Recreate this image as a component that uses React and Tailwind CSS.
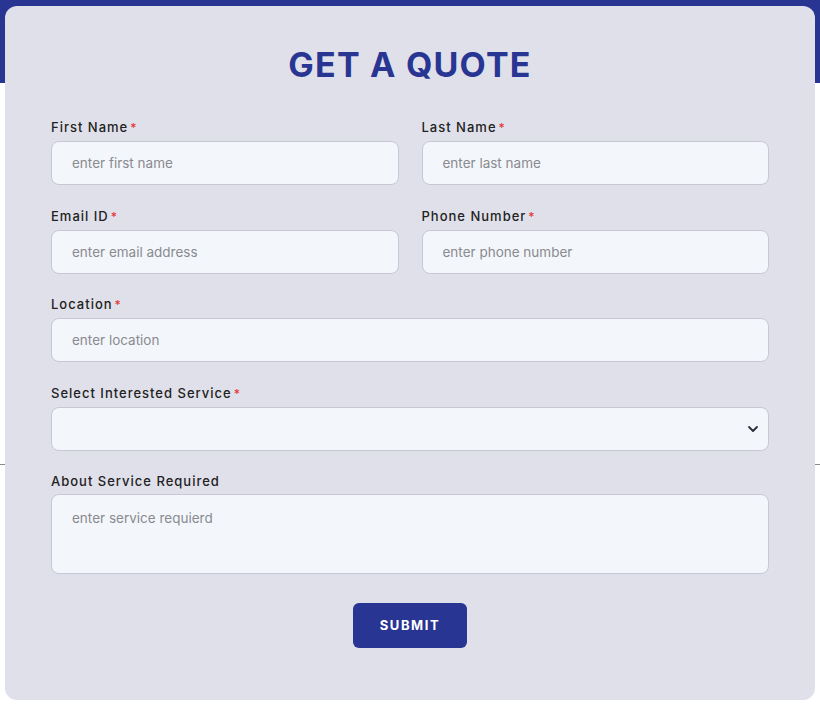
const Label = ({ children, required }) => (
  <label className="block text-[13px] leading-[16px] tracking-[1px] text-[#222] font-medium mb-[5px]">
    {children}
    {required && <span className="text-[#e53935] ml-[2px] text-[12px] leading-[16px]">*</span>}
  </label>
);

const inputCls =
  'w-full h-[44px] px-[20px] rounded-[8px] border border-[#c6c8d6] bg-[#f3f7fb] text-[13.5px] text-[#333] placeholder:text-[#8a8a8f] outline-none';

const Field = ({ label, placeholder, required = true, className = '' }) => (
  <div className={className}>
    <Label required={required}>{label}</Label>
    <input type="text" placeholder={placeholder} className={inputCls} />
  </div>
);

export default function App() {
  return (
    <div className="relative w-[820px] h-[707px] bg-white overflow-hidden" style={{ fontFamily: 'Inter, "Noto Sans", sans-serif' }}>
      <div className="absolute inset-x-0 top-0 h-[83px] bg-[#283593]" />
      <div className="absolute inset-x-0 top-[464px] h-px bg-[#8a8a8a]" />
      <div className="relative mx-[5px] mt-[6px] h-[694px] rounded-[12px] bg-[#e0e0ea] px-[46px] pt-[39px]">
        <h1 className="text-center text-[34px] leading-[40px] font-bold tracking-[1.2px] text-[#283593] mb-[34px]">
          GET A QUOTE
        </h1>
        <div className="grid grid-cols-2 gap-x-[23px] gap-y-[22.5px]">
          <Field label="First Name" placeholder="enter first name" />
          <Field label="Last Name" placeholder="enter last name" />
          <Field label="Email ID" placeholder="enter email address" />
          <Field label="Phone Number" placeholder="enter phone number" />
          <Field label="Location" placeholder="enter location" className="col-span-2" />
          <div className="col-span-2">
            <Label required>Select Interested Service</Label>
            <div className="relative">
              <select className={`${inputCls} appearance-none`} defaultValue="">
                <option value=""></option>
              </select>
              <svg className="absolute right-[10px] top-1/2 -translate-y-1/2 pointer-events-none" width="12" height="12" viewBox="0 0 12 12" fill="none">
                <path d="M2 4l4 4 4-4" stroke="#2a2d3a" strokeWidth="1.8" strokeLinecap="round" strokeLinejoin="round" />
              </svg>
            </div>
          </div>
          <div className="col-span-2">
            <Label>About Service Required</Label>
            <textarea
              placeholder="enter service requierd"
              className="w-full h-[80px] px-[20px] pt-[13px] rounded-[8px] border border-[#c6c8d6] bg-[#f3f7fb] text-[13.5px] text-[#333] placeholder:text-[#8a8a8f] outline-none resize-none block"
            />
          </div>
        </div>
        <div className="flex justify-center mt-[29px]">
          <button className="w-[114px] h-[45px] rounded-[6px] bg-[#283593] text-white text-[13px] font-bold tracking-[1.6px]">
            SUBMIT
          </button>
        </div>
      </div>
    </div>
  );
}
